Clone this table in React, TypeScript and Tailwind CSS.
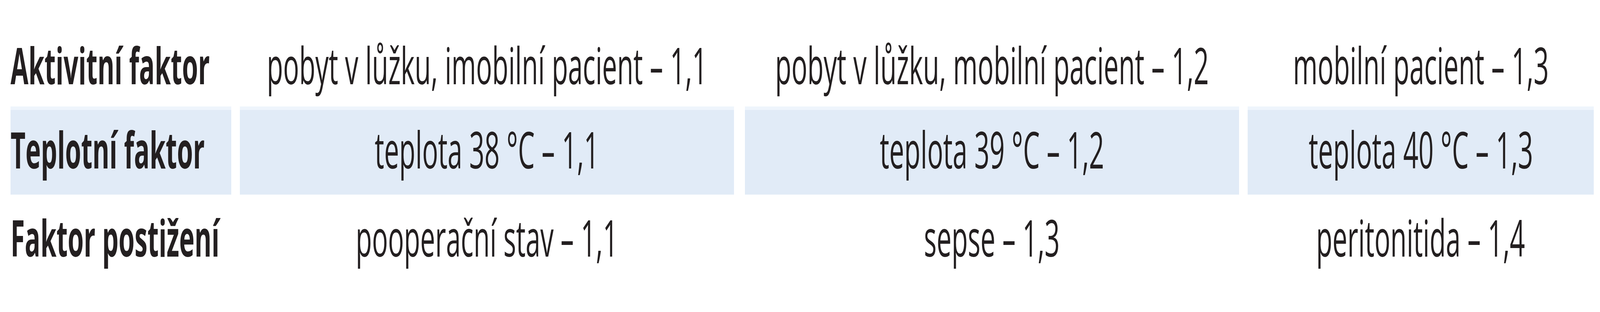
import React, { useEffect, useState } from "react";

const rows: { label: string; cells: string[]; shaded: boolean; pad: string }[] = [
  {
    label: "Aktivitní faktor",
    cells: [
      "pobyt v lůžku, imobilní pacient – 1,1",
      "pobyt v lůžku, mobilní pacient – 1,2",
      "mobilní pacient – 1,3",
    ],
    shaded: false,
    pad: "pt-[30px]",
  },
  {
    label: "Teplotní faktor",
    cells: ["teplota 38 °C – 1,1", "teplota 39 °C – 1,2", "teplota 40 °C – 1,3"],
    shaded: true,
    pad: "pt-[11px]",
  },
  {
    label: "Faktor postižení",
    cells: ["pooperační stav – 1,1", "sepse – 1,3", "peritonitida – 1,4"],
    shaded: false,
    pad: "pt-[20px]",
  },
];

function useScale() {
  const [s, setS] = useState(1);
  useEffect(() => {
    const f = () => setS(window.innerWidth / 7096);
    f();
    window.addEventListener("resize", f);
    return () => window.removeEventListener("resize", f);
  }, []);
  return s;
}

function Txt({ children, sx, left }: { children: React.ReactNode; sx: number; left?: boolean }) {
  return (
    <span
      className={`inline-block whitespace-nowrap ${left ? "origin-left" : "origin-center"}`}
      style={{ transform: `scaleX(${sx})` }}
    >
      {children}
    </span>
  );
}

function Row({
  label,
  cells,
  shaded,
  pad,
  s,
}: {
  label: string;
  cells: string[];
  shaded: boolean;
  pad: string;
  s: number;
}) {
  const band = shaded ? "bg-[#e1ebf7] border-t-[9px] border-[#eef5fc]" : "";
  const cell = `min-w-0 h-[226px] ${pad} ${band}`;
  const reg = s * 0.907;
  return (
    <div className="grid grid-cols-[minmax(0,46fr)_minmax(0,980fr)_minmax(0,37fr)_minmax(0,2193fr)_minmax(0,47fr)_minmax(0,2193fr)_minmax(0,38fr)_minmax(0,1534fr)_minmax(0,28fr)]">
      <div />
      <div className={`${cell} flex justify-start font-bold`}>
        <Txt sx={s * 0.883} left>
          {label}
        </Txt>
      </div>
      <div />
      <div className={`${cell} flex justify-center`}>
        <Txt sx={reg}>{cells[0]}</Txt>
      </div>
      <div />
      <div className={`${cell} flex justify-center`}>
        <Txt sx={reg}>{cells[1]}</Txt>
      </div>
      <div />
      <div className={`${cell} flex justify-center`}>
        <Txt sx={reg}>{cells[2]}</Txt>
      </div>
      <div />
    </div>
  );
}

export default function App() {
  const s = useScale();
  return (
    <div className="w-full h-[800px] bg-white text-[#231f20] font-['Open_Sans',sans-serif] text-[130px] leading-[177px] pt-[47px] overflow-hidden">
      {rows.map((r) => (
        <Row key={r.label} {...r} s={s} />
      ))}
    </div>
  );
}
